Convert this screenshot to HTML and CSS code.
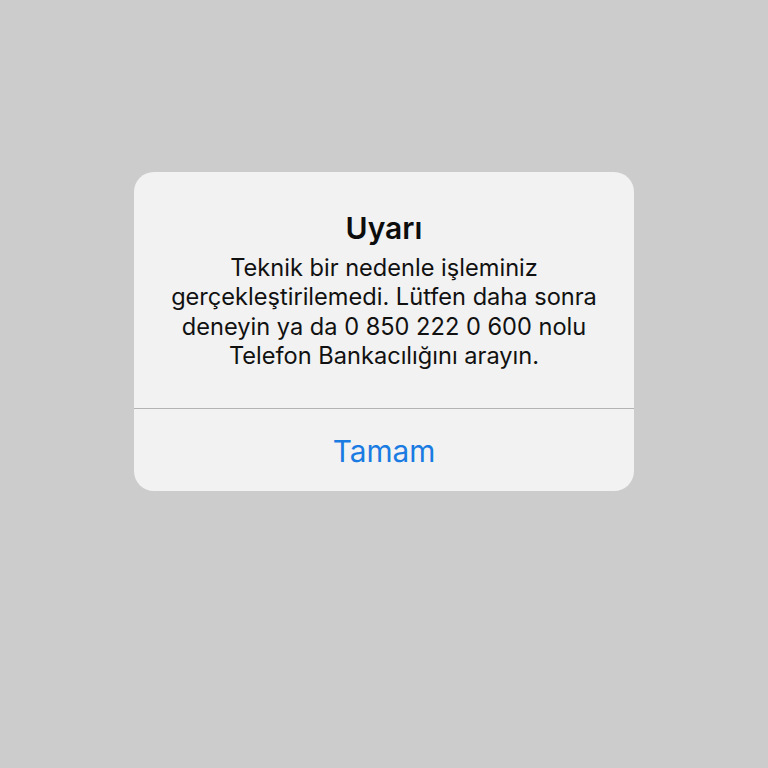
FILE: index.html
```html
<!DOCTYPE html>
<html lang="tr">
<head>
<meta charset="utf-8">
<link rel="stylesheet" href="styles.css">
</head>
<body>
<div class="screen">
  <div class="alert">
    <div class="alert-content">
      <h1 class="alert-title">Uyarı</h1>
      <p class="alert-message">Teknik bir nedenle işleminiz gerçekleştirilemedi. Lütfen daha sonra deneyin ya da 0 850 222 0 600 nolu Telefon Bankacılığını arayın.</p>
    </div>
    <div class="alert-actions">
      <button class="alert-button">Tamam</button>
    </div>
  </div>
</div>
</body>
</html>
```
FILE: styles.css
```css
html, body {
  margin: 0;
  padding: 0;
  background: #cccccc;
}
.screen {
  width: 768px;
  height: 768px;
  display: flex;
  justify-content: center;
  align-items: flex-start;
  padding-top: 172px;
  box-sizing: border-box;
  font-family: Inter, "Noto Sans", sans-serif;
}
.alert {
  width: 500px;
  background: #f2f2f2;
  border-radius: 20px;
  overflow: hidden;
}
.alert-content {
  height: 237px;
  box-sizing: border-box;
  padding: 38px 24px 0;
  text-align: center;
  border-bottom: 1px solid #b3b3b3;
}
.alert-title {
  margin: 0;
  font-size: 30px;
  line-height: 36px;
  font-weight: 600;
  color: #0d0d0d;
}
.alert-message {
  margin: 7px 0 0;
  font-size: 23.6px;
  line-height: 29.4px;
  color: #111111;
}
.alert-actions {
  height: 82px;
  display: flex;
  align-items: center;
  justify-content: center;
}
.alert-button {
  border: none;
  background: none;
  padding: 0;
  font-family: inherit;
  font-size: 29.8px;
  color: #1a7be2;
  margin-top: 2px;
}
```
